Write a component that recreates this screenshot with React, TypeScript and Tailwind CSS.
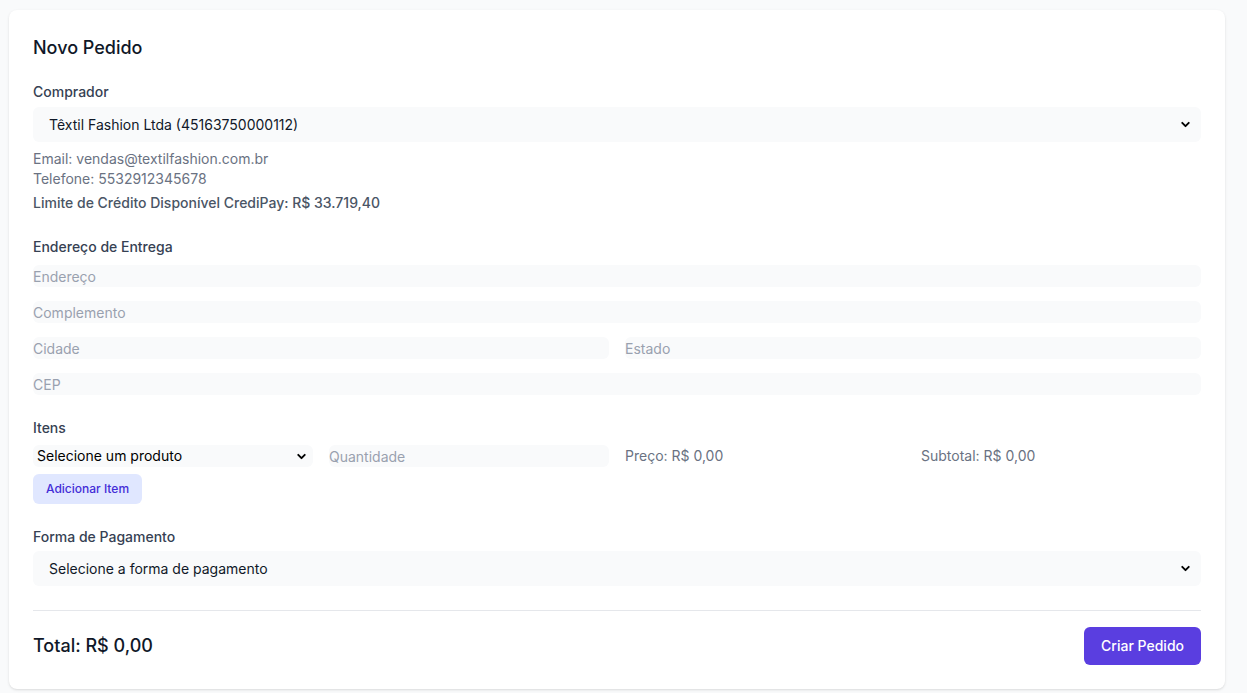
import React from 'react';
import { ChevronDown } from 'lucide-react';

function FakeSelect({ value, tall = true }: { value: string; tall?: boolean }) {
  return (
    <div
      className={
        tall
          ? 'flex items-center justify-between h-[35px] bg-gray-50 rounded-md pl-4 pr-[9px] text-sm text-gray-900'
          : 'flex items-center justify-between h-[22px] bg-gray-50 rounded-md pl-1 pr-[5px] text-sm text-black'
      }
    >
      <span>{value}</span>
      <ChevronDown className="w-[13px] h-[13px] text-black" strokeWidth={3.5} />
    </div>
  );
}

function Field({ placeholder }: { placeholder: string }) {
  return (
    <input
      placeholder={placeholder}
      className="w-full h-[22px] bg-gray-50 rounded-md text-sm placeholder:text-gray-400 outline-none"
    />
  );
}

export default function App() {
  return (
    <div
      className="min-h-screen bg-gray-50 pt-[10px] pl-[9px]"
      style={{ fontFamily: 'Inter, "Noto Sans", sans-serif' }}
    >
      <div className="w-[1216px] bg-white rounded-lg shadow-sm p-6">
        <h2 className="text-lg font-medium text-gray-900 mb-5">Novo Pedido</h2>

        {/* Comprador */}
        <div>
          <label className="block text-sm font-medium text-gray-700 mb-[5px]">Comprador</label>
          <FakeSelect value="Têxtil Fashion Ltda (45163750000112)" />
          <div className="mt-[7px] text-sm text-gray-500">
            <p>Email: vendas@textilfashion.com.br</p>
            <p>Telefone: 5532912345678</p>
            <p className="mt-1 font-medium text-gray-600">
              Limite de Crédito Disponível CrediPay: R$ 33.719,40
            </p>
          </div>
        </div>

        {/* Endereço */}
        <div className="mt-6">
          <label className="block text-sm font-medium text-gray-700 mb-2">Endereço de Entrega</label>
          <div className="flex flex-col gap-[14px]">
            <Field placeholder="Endereço" />
            <Field placeholder="Complemento" />
            <div className="grid grid-cols-2 gap-4">
              <Field placeholder="Cidade" />
              <Field placeholder="Estado" />
            </div>
            <Field placeholder="CEP" />
          </div>
        </div>

        {/* Itens */}
        <div className="mt-[23px]">
          <label className="block text-sm font-medium text-gray-700 mb-[7px]">Itens</label>
          <div className="grid grid-cols-4 gap-4 items-center">
            <FakeSelect value="Selecione um produto" tall={false} />
            <Field placeholder="Quantidade" />
            <span className="text-sm text-gray-500">Preço: R$ 0,00</span>
            <span className="text-sm text-gray-500">Subtotal: R$ 0,00</span>
          </div>
          <button className="mt-[7px] h-[30px] px-[13px] bg-indigo-100 text-indigo-700 text-xs font-medium rounded-md">
            Adicionar Item
          </button>
        </div>

        {/* Pagamento */}
        <div className="mt-[23px]">
          <label className="block text-sm font-medium text-gray-700 mb-1">Forma de Pagamento</label>
          <FakeSelect value="Selecione a forma de pagamento" />
        </div>

        <div className="mt-6 border-t border-gray-200 pt-4 flex items-center justify-between">
          <span className="text-lg font-medium text-gray-900">Total: R$ 0,00</span>
          <button className="h-[38px] px-[17px] bg-[#5a3ee0] text-white text-sm font-medium rounded-md">
            Criar Pedido
          </button>
        </div>
      </div>
    </div>
  );
}
